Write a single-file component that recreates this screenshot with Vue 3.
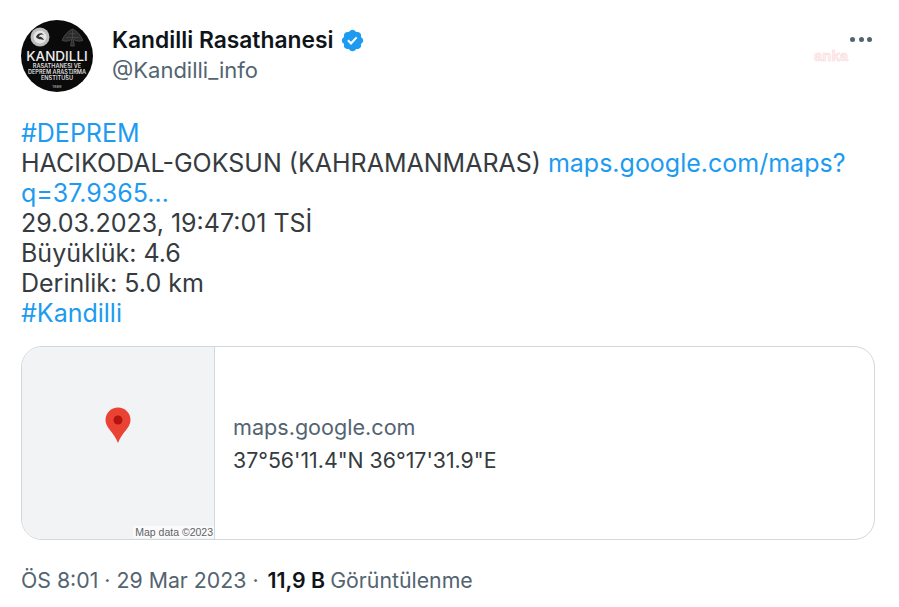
<template>
    <div class="Tweet">
        <div class="Head">
            <div class="Avatar">
                <div class="Emblems">
                    <svg class="Seal" viewBox="0 0 20 20">
                        <circle cx="10" cy="10" r="9.5" fill="#bdbdbd"/>
                        <circle cx="10" cy="10" r="6.5" fill="#e6e6e6"/>
                        <path d="M6 10 C7 6 12 5 14 8 C11 7 9 8 9 10 C11 9 13 11 14 13 C11 12 8 13 6 10 Z" fill="#333"/>
                    </svg>
                    <svg class="Tree" viewBox="0 0 24 20">
                        <path d="M12 1 C7 3 3 8 1 13 C6 15 9 13 11 12 L10 19 L14 19 L13 12 C15 13 18 15 23 13 C21 8 17 3 12 1 Z" fill="#2c2c2c" stroke="#5a5a5a" stroke-width="0.7"/>
                        <path d="M5 10 L19 10 M8 6 L16 6 M12 2 L12 12" stroke="#555" stroke-width="0.6"/>
                    </svg>
                </div>
                <div class="Big">KANDILLI</div>
                <div class="Small">RASATHANESI VE</div>
                <div class="Small">DEPREM ARAŞTIRMA</div>
                <div class="Small">ENSTITÜSÜ</div>
                <div class="Year">1868</div>
            </div>
            <div class="Who">
                <div class="Name">
                    <span>Kandilli Rasathanesi</span>
                    <svg class="Badge" viewBox="0 0 24 24">
                        <path fill="#1d9bf0" d="M22.25 12c0-1.43-.88-2.67-2.19-3.34.46-1.39.2-2.9-.81-3.91s-2.52-1.27-3.91-.81c-.66-1.31-1.91-2.19-3.34-2.19s-2.67.88-3.33 2.19c-1.4-.46-2.91-.2-3.92.81s-1.26 2.52-.8 3.91c-1.31.67-2.2 1.91-2.2 3.34s.89 2.67 2.2 3.34c-.46 1.39-.21 2.9.8 3.91s2.52 1.26 3.91.81c.67 1.31 1.91 2.19 3.34 2.19s2.68-.88 3.34-2.19c1.39.45 2.9.2 3.91-.81s1.27-2.52.81-3.91c1.31-.67 2.19-1.91 2.19-3.34z"/>
                        <path fill="#fff" d="M10.54 16.2l-3.64-3.64 1.41-1.42 2.16 2.17 4.86-5.01 1.44 1.39z"/>
                    </svg>
                </div>
                <div class="Handle">@Kandilli_info</div>
            </div>
            <div class="More">
                <i></i><i></i><i></i>
            </div>
        </div>

        <div class="Body">
            <div><a>#DEPREM</a></div>
            <div>HACIKODAL-GOKSUN (KAHRAMANMARAS) <a>maps.google.com/maps?</a></div>
            <div><a>q=37.9365…</a></div>
            <div>29.03.2023, 19:47:01 TSİ</div>
            <div>Büyüklük: 4.6</div>
            <div>Derinlik: 5.0 km</div>
            <div><a>#Kandilli</a></div>
        </div>

        <div class="Card">
            <div class="Map">
                <svg class="Pin" viewBox="0 0 26 36">
                    <path fill="#ea4335" d="M13 0.5 C6 0.5 0.5 6 0.5 13 C0.5 21 9 25 13 36 C17 25 25.5 21 25.5 13 C25.5 6 20 0.5 13 0.5 Z"/>
                    <circle cx="13" cy="13" r="4.5" fill="#b3140e"/>
                </svg>
                <span class="Credit">Map data ©2023</span>
            </div>
            <div class="Info">
                <div class="Domain">maps.google.com</div>
                <div class="Coords">37°56'11.4"N 36°17'31.9"E</div>
            </div>
        </div>

        <div class="Foot">
            <span>ÖS 8:01 · 29 Mar 2023 · </span><b>11,9 B</b><span> Görüntülenme</span>
        </div>

        <div class="Anka">anka</div>
    </div>
</template>

<script setup>
</script>

<style>
    html, body {
        background-color: #fff;
    }
</style>

<style scoped>
    .Tweet {
        position: relative;
        width: 899px;
        height: 607px;
        box-sizing: border-box;
        padding: 20px 24px 0 21px;
        overflow: hidden;
        background-color: #fff;
        font-family: Inter, "Liberation Sans", sans-serif;
        color: #0f1419;
    }

    .Head {
        display: flex;
        align-items: center;
        gap: 19px;
    }

    .Avatar {
        flex: none;
        width: 72px;
        height: 72px;
        border-radius: 50%;
        background-color: #0a0a0a;
        color: #ddd;
        text-align: center;
        display: flex;
        flex-direction: column;
        align-items: center;
        font-weight: 600;
        overflow: hidden;
    }

    .Emblems {
        display: flex;
        gap: 11px;
        margin-top: 7px;
        height: 20px;
        align-items: center;
    }

    .Seal {
        width: 20px;
        height: 20px;
    }

    .Tree {
        width: 23px;
        height: 19px;
    }

    .Big {
        font-size: 13.5px;
        line-height: 14px;
        font-weight: 500;
        color: #eee;
        margin-top: 2px;
    }

    .Small {
        font-size: 5.6px;
        line-height: 6.2px;
        white-space: nowrap;
    }

    .Year {
        font-size: 4px;
        line-height: 7px;
        color: #999;
        margin-top: 1px;
    }

    .Who {
        flex: 1;
        margin-top: -2px;
    }

    .Name {
        display: flex;
        align-items: center;
        gap: 7px;
        font-size: 22.8px;
        line-height: 30px;
        font-weight: 600;
    }

    .Badge {
        width: 25px;
        height: 25px;
    }

    .Handle {
        font-size: 22px;
        line-height: 30px;
        color: #536471;
    }

    .More {
        display: flex;
        gap: 3.3px;
        margin: -34px 3px 0 0;
    }

    .More i {
        width: 5px;
        height: 5px;
        border-radius: 50%;
        background-color: #536471;
    }

    .Body {
        margin-top: 26px;
        font-size: 25px;
        line-height: 30px;
        color: #363b40;
    }

    .Body a {
        color: #1d9bf0;
    }

    .Card {
        display: flex;
        height: 194px;
        margin-top: 18px;
        border: 1px solid #cfd9de;
        border-radius: 21px;
        overflow: hidden;
        box-sizing: border-box;
    }

    .Map {
        position: relative;
        flex: none;
        width: 192px;
        background-color: #f2f3f5;
        border-right: 1px solid #cfd9de;
        display: flex;
        align-items: center;
        justify-content: center;
    }

    .Pin {
        width: 26px;
        height: 36px;
        margin-bottom: 36px;
    }

    .Credit {
        position: absolute;
        right: 0;
        bottom: 1px;
        padding: 0 1px 0 2px;
        background-color: #fafafa;
        font-family: "Liberation Sans", sans-serif;
        font-size: 10.5px;
        line-height: 12px;
        color: #5f6368;
    }

    .Info {
        flex: 1;
        display: flex;
        flex-direction: column;
        justify-content: center;
        padding: 0 18px 1px;
        gap: 4px;
    }

    .Domain {
        font-size: 21.6px;
        line-height: 30px;
        color: #536471;
    }

    .Coords {
        font-size: 21.3px;
        line-height: 28px;
        color: #363b40;
    }

    .Foot {
        margin-top: 25px;
        font-size: 21.3px;
        line-height: 30px;
        color: #536471;
    }

    .Foot b {
        color: #0f1419;
        font-weight: 600;
        margin: 0 -1px 0 3px;
    }

    .Anka {
        position: absolute;
        left: 814px;
        top: 47px;
        font-family: "Liberation Sans", sans-serif;
        font-size: 15px;
        font-weight: 700;
        color: #fef0f0;
        -webkit-text-stroke: 0.5px #fbd5d5;
    }
</style>
